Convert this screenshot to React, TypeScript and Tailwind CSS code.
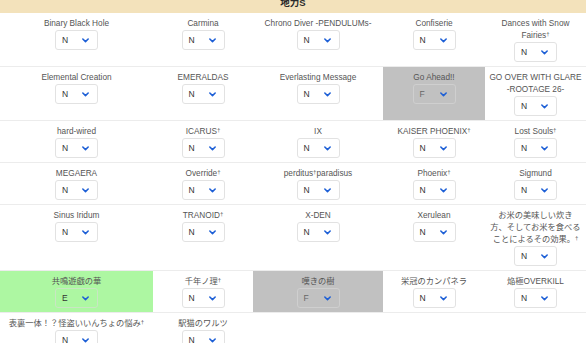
import React from "react";

type Cell = { l: string | string[]; v?: string; bg?: "green" | "gray" };

const rows: Cell[][] = [
  [
    { l: "Binary Black Hole" },
    { l: "Carmina" },
    { l: "Chrono Diver -PENDULUMs-" },
    { l: "Confiserie" },
    { l: ["Dances with Snow", "Fairies†"] },
  ],
  [
    { l: "Elemental Creation" },
    { l: "EMERALDAS" },
    { l: "Everlasting Message" },
    { l: "Go Ahead!!", v: "F", bg: "gray" },
    { l: ["GO OVER WITH GLARE", "-ROOTAGE 26-"] },
  ],
  [
    { l: "hard-wired" },
    { l: "ICARUS†" },
    { l: "IX" },
    { l: "KAISER PHOENIX†" },
    { l: "Lost Souls†" },
  ],
  [
    { l: "MEGAERA" },
    { l: "Override†" },
    { l: "perditus†paradisus" },
    { l: "Phoenix†" },
    { l: "Sigmund" },
  ],
  [
    { l: "Sinus Iridum" },
    { l: "TRANOID†" },
    { l: "X-DEN" },
    { l: "Xerulean" },
    { l: ["お米の美味しい炊き", "方、そしてお米を食べる", "ことによるその効果。†"] },
  ],
  [
    { l: "共鳴遊戯の華", v: "E", bg: "green" },
    { l: "千年ノ理†" },
    { l: "嘆きの樹", v: "F", bg: "gray" },
    { l: "栄冠のカンパネラ" },
    { l: "焔極OVERKILL" },
  ],
  [{ l: "表裏一体！？怪盗いいんちょの悩み†" }, { l: "駅猫のワルツ" }],
];

function Line({ text }: { text: string }) {
  const parts = text.split("†");
  return (
    <>
      {parts.map((p, i) => (
        <React.Fragment key={i}>
          {p}
          {i < parts.length - 1 && (
            <span className="relative -top-[2px] text-[6px]">†</span>
          )}
        </React.Fragment>
      ))}
    </>
  );
}

function Chevron() {
  return (
    <svg width="7" height="5" viewBox="0 0 10 7" fill="none">
      <path
        d="M1.2 1.3 5 5.1 8.8 1.3"
        stroke="#1d5fd6"
        strokeWidth="2.2"
        strokeLinecap="round"
        strokeLinejoin="round"
      />
    </svg>
  );
}

function CellView({ c }: { c: Cell }) {
  const lines = Array.isArray(c.l) ? c.l : [c.l];
  const bg =
    c.bg === "green" ? "bg-[#adf7a2]" : c.bg === "gray" ? "bg-[#c1c1c1]" : "bg-white";
  const val = c.v ?? "N";
  return (
    <div className={`${bg} flex flex-col items-center pt-[5px] pb-[4px] px-1`}>
      <div className="text-[8.25px] leading-[12px] text-[#555] text-center whitespace-nowrap">
        {lines.map((ln, i) => (
          <div key={i}>
            <Line text={ln} />
          </div>
        ))}
      </div>
      <div
        className={`w-[43px] h-[20px] rounded-[3px] border flex items-center justify-between pl-[6px] pr-[8px] ${
          c.bg === "gray" ? "border-[#cfcfcf]" : c.bg === "green" ? "border-[#c9e6c3]" : "border-[#e2e2e2]"
        }`}
      >
        <span
          className={`text-[8.5px] leading-none ${c.bg === "gray" ? "text-[#666]" : "text-[#333]"}`}
        >
          {val}
        </span>
        <Chevron />
      </div>
    </div>
  );
}

export default function App() {
  return (
    <div
      className="w-[586px] h-[343px] overflow-hidden bg-white"
      style={{ fontFamily: '"Liberation Sans", "Noto Sans CJK JP", sans-serif' }}
    >
      <div className="h-[13px] bg-[#f3e2bb] flex justify-center overflow-hidden">
        <span className="text-[9.5px] leading-[9px] -mt-[2px] font-bold text-[#2a2a2a]">地力S</span>
      </div>
      {rows.map((r, i) => (
        <div
          key={i}
          className="grid grid-cols-[153px_100px_130px_102px_101px] border-b border-[#ececec]"
        >
          {r.map((c, j) => (
            <CellView key={j} c={c} />
          ))}
        </div>
      ))}
    </div>
  );
}
